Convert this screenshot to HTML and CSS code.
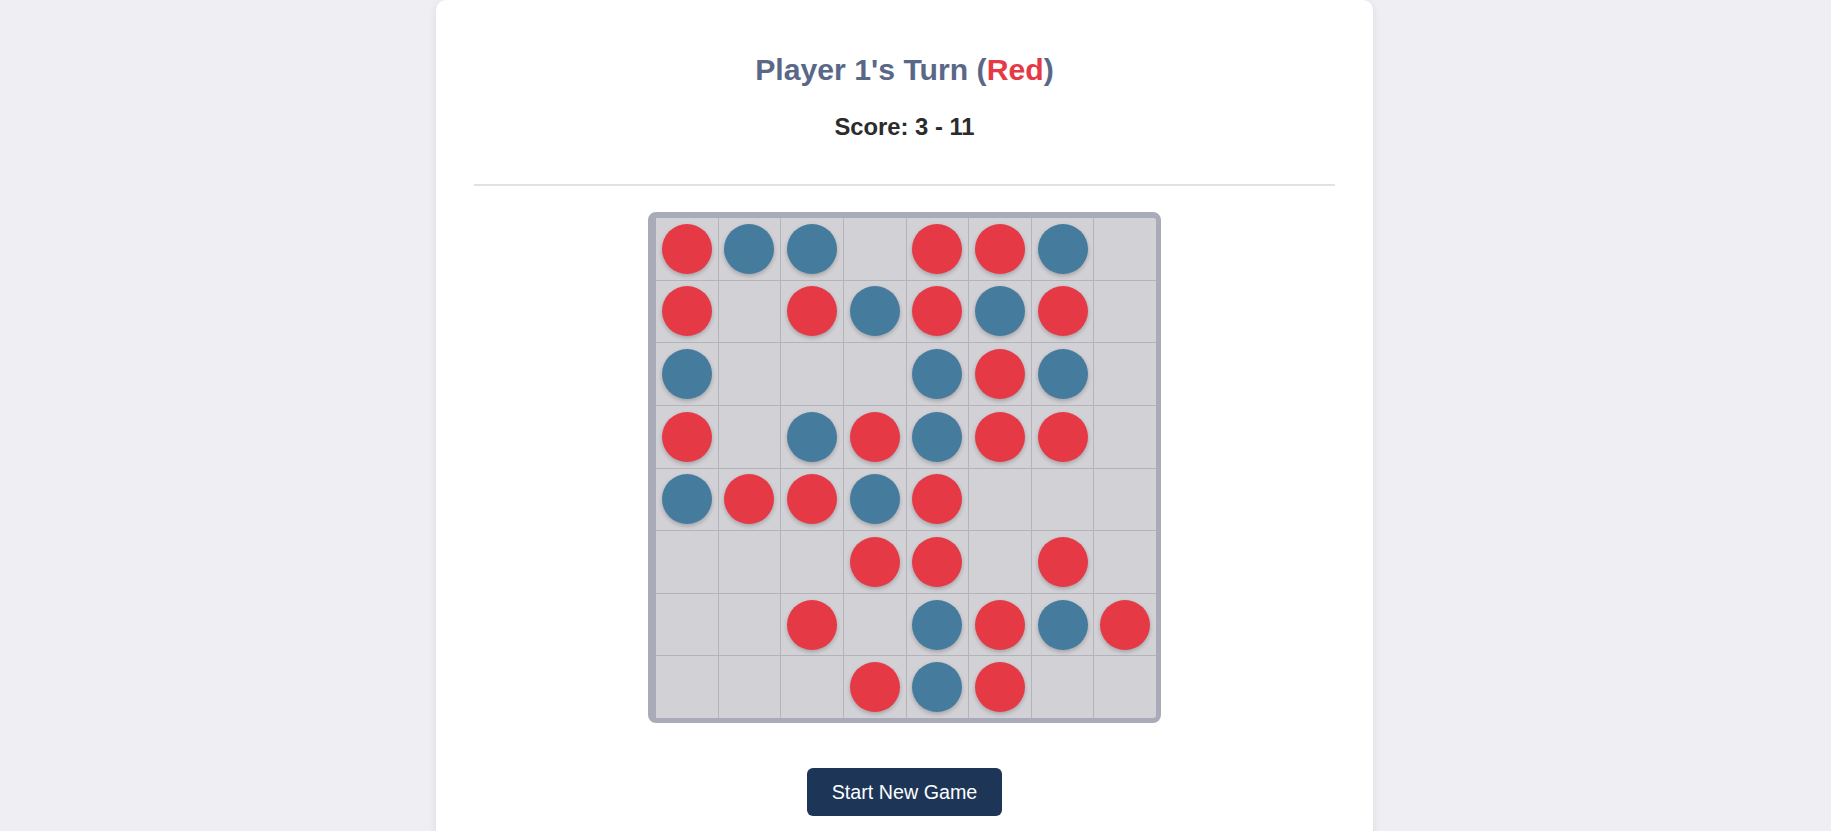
FILE: index.html
```html
<!DOCTYPE html>
<html lang="en">
<head>
<meta charset="utf-8">
<title>Connect Four</title>
<link rel="stylesheet" href="styles.css">
</head>
<body>
<main class="card">
  <header class="status">
    <h1 class="turn">Player 1's Turn (<span class="red-text">Red</span>)</h1>
    <h2 class="score">Score: 3 - 11</h2>
  </header>
  <hr class="divider">
  <div class="board">
    <div class="cell"><span class="disc red"></span></div>
    <div class="cell"><span class="disc blue"></span></div>
    <div class="cell"><span class="disc blue"></span></div>
    <div class="cell"></div>
    <div class="cell"><span class="disc red"></span></div>
    <div class="cell"><span class="disc red"></span></div>
    <div class="cell"><span class="disc blue"></span></div>
    <div class="cell"></div>

    <div class="cell"><span class="disc red"></span></div>
    <div class="cell"></div>
    <div class="cell"><span class="disc red"></span></div>
    <div class="cell"><span class="disc blue"></span></div>
    <div class="cell"><span class="disc red"></span></div>
    <div class="cell"><span class="disc blue"></span></div>
    <div class="cell"><span class="disc red"></span></div>
    <div class="cell"></div>

    <div class="cell"><span class="disc blue"></span></div>
    <div class="cell"></div>
    <div class="cell"></div>
    <div class="cell"></div>
    <div class="cell"><span class="disc blue"></span></div>
    <div class="cell"><span class="disc red"></span></div>
    <div class="cell"><span class="disc blue"></span></div>
    <div class="cell"></div>

    <div class="cell"><span class="disc red"></span></div>
    <div class="cell"></div>
    <div class="cell"><span class="disc blue"></span></div>
    <div class="cell"><span class="disc red"></span></div>
    <div class="cell"><span class="disc blue"></span></div>
    <div class="cell"><span class="disc red"></span></div>
    <div class="cell"><span class="disc red"></span></div>
    <div class="cell"></div>

    <div class="cell"><span class="disc blue"></span></div>
    <div class="cell"><span class="disc red"></span></div>
    <div class="cell"><span class="disc red"></span></div>
    <div class="cell"><span class="disc blue"></span></div>
    <div class="cell"><span class="disc red"></span></div>
    <div class="cell"></div>
    <div class="cell"></div>
    <div class="cell"></div>

    <div class="cell"></div>
    <div class="cell"></div>
    <div class="cell"></div>
    <div class="cell"><span class="disc red"></span></div>
    <div class="cell"><span class="disc red"></span></div>
    <div class="cell"></div>
    <div class="cell"><span class="disc red"></span></div>
    <div class="cell"></div>

    <div class="cell"></div>
    <div class="cell"></div>
    <div class="cell"><span class="disc red"></span></div>
    <div class="cell"></div>
    <div class="cell"><span class="disc blue"></span></div>
    <div class="cell"><span class="disc red"></span></div>
    <div class="cell"><span class="disc blue"></span></div>
    <div class="cell"><span class="disc red"></span></div>

    <div class="cell"></div>
    <div class="cell"></div>
    <div class="cell"></div>
    <div class="cell"><span class="disc red"></span></div>
    <div class="cell"><span class="disc blue"></span></div>
    <div class="cell"><span class="disc red"></span></div>
    <div class="cell"></div>
    <div class="cell"></div>
  </div>
  <div class="actions">
    <button class="new-game" type="button">Start New Game</button>
  </div>
</main>
</body>
</html>
```

FILE: styles.css
```css
html, body {
  margin: 0;
  padding: 0;
}

body {
  background: #eeeef3;
  font-family: "Liberation Sans", Arial, sans-serif;
  display: flex;
  justify-content: center;
  padding-right: 22px;
  height: 831px;
  overflow: hidden;
}

.card {
  box-sizing: border-box;
  width: 937px;
  min-height: 860px;
  background: #ffffff;
  border-radius: 10px;
  box-shadow: 0 2px 10px rgba(0, 0, 0, 0.08);
  padding: 52px 38px 0;
  display: flex;
  flex-direction: column;
  align-items: center;
}

.status {
  text-align: center;
}

.turn {
  margin: 0;
  font-size: 30.2px;
  line-height: 35px;
  font-weight: 700;
  color: #5a6887;
}

.red-text {
  color: #e63946;
}

.score {
  margin: 26px 0 0;
  font-size: 23.8px;
  line-height: 27px;
  font-weight: 700;
  color: #2b2b2b;
}

.divider {
  align-self: stretch;
  margin: 44px 0 0;
  border: 0;
  height: 2px;
  background: #e1e1e3;
}

.board {
  margin-top: 26px;
  box-sizing: content-box;
  width: 500px;
  height: 500px;
  border-style: solid;
  border-color: #a9acb8;
  border-width: 6px 5px 5px 8px;
  border-radius: 8px;
  background: #b3b3ba;
  display: grid;
  grid-template-columns: repeat(8, 1fr);
  grid-template-rows: repeat(8, 1fr);
  gap: 1px;
  overflow: hidden;
}

.cell {
  background: #d1d1d6;
  display: flex;
  align-items: center;
  justify-content: center;
}

.disc {
  width: 50px;
  height: 50px;
  border-radius: 50%;
  box-shadow: 0 2px 4px rgba(0, 0, 0, 0.22);
}

.disc.red {
  background: #e63946;
}

.disc.blue {
  background: #457b9d;
}

.actions {
  margin-top: 45px;
  display: flex;
  justify-content: center;
}

.new-game {
  box-sizing: border-box;
  height: 48px;
  padding: 0 25px;
  border: 0;
  border-radius: 6px;
  background: #1d3557;
  color: #ffffff;
  font-family: "Liberation Sans", Arial, sans-serif;
  font-size: 19.7px;
  cursor: pointer;
}
```
